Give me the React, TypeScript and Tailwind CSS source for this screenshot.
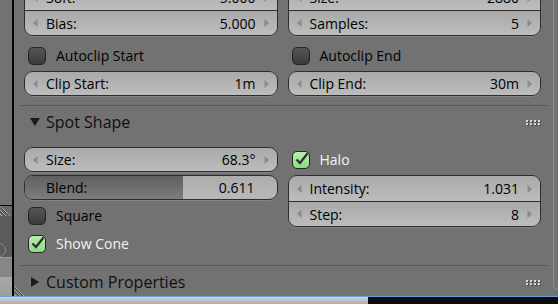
import React from 'react';

const font = { fontFamily: '"Open Sans", "Noto Sans", sans-serif' };

// Small left / right arrows drawn inside number fields
const ArrowL = () => (
  <svg width="5" height="8" viewBox="0 0 5 8" className="shrink-0">
    <path d="M4.5 0 L0 4 L4.5 8 Z" fill="#8a8a8a" />
  </svg>
);
const ArrowR = () => (
  <svg width="5" height="8" viewBox="0 0 5 8" className="shrink-0">
    <path d="M0.5 0 L5 4 L0.5 8 Z" fill="#8a8a8a" />
  </svg>
);

const FieldBody = ({ label, value }: { label: string; value: string }) => (
  <div className="flex h-full items-center bg-linear-to-b from-[#a9a9a9] to-[#bdbdbd] pl-[8px] pr-[8px] text-[14px] text-black">
    <ArrowL />
    <span className="ml-[8px]">{label}</span>
    <span className="ml-auto mr-[8px]">{value}</span>
    <ArrowR />
  </div>
);

const NumField = ({ label, value }: { label: string; value: string }) => (
  <div className="h-[25px] overflow-hidden rounded-[9px] border border-[#2d2d2d] shadow-[0_1px_0_#858585]">
    <FieldBody label={label} value={value} />
  </div>
);

// Fields stacked with align, sharing one outline
const FieldGroup = ({ items, className = '' }: { items: { label: string; value: string }[]; className?: string }) => (
  <div className={`flex flex-col overflow-hidden rounded-[9px] border border-[#2d2d2d] shadow-[0_1px_0_#858585] ${className}`}>
    {items.map((it, i) => (
      <div key={it.label} className={`h-[25px] ${i > 0 ? 'border-t border-[#2d2d2d]' : ''}`}>
        <FieldBody label={it.label} value={it.value} />
      </div>
    ))}
  </div>
);

const Slider = ({ label, value }: { label: string; value: number }) => (
  <div className="relative h-[25px] overflow-hidden rounded-[9px] border border-[#2d2d2d] bg-linear-to-b from-[#acacac] to-[#b9b9b9] shadow-[0_1px_0_#858585]">
    <div
      className="absolute inset-y-0 left-0 bg-linear-to-b from-[#606060] to-[#7d7d7d]"
      style={{ width: `${value * 102.5}%` }}
    />
    <div className="relative flex h-full items-center pl-[21px] pr-[22px] text-[14px] text-black">
      <span>{label}</span>
      <span className="ml-auto">{value.toFixed(3)}</span>
    </div>
  </div>
);

const Check = ({ label, on = false }: { label: string; on?: boolean }) => (
  <div className="flex h-[25px] items-center pl-[4px] text-[14px]">
    <div
      className={`relative h-[18px] w-[18px] rounded-[5px] border border-[#262626] ${
        on ? 'bg-linear-to-b from-[#b4f0aa] to-[#8fd985]' : 'bg-linear-to-b from-[#565656] to-[#3a3a3a]'
      }`}
    >
      {on && (
        <svg width="18" height="18" viewBox="0 0 18 18" className="absolute -left-px -top-px overflow-visible">
          <path d="M4.5 8.5 L8 12 L15.5 2.5" fill="none" stroke="#2e2e2e" strokeWidth="2.2" />
        </svg>
      )}
    </div>
    <span className={`ml-[10px] ${on ? 'text-[#f4f4f4]' : 'text-black'}`}>{label}</span>
  </div>
);

const Grip = () => (
  <div className="grid grid-cols-4 gap-x-[2px] gap-y-[1px]">
    {Array.from({ length: 8 }).map((_, i) => (
      <div key={i} className="h-[2px] w-[2px] bg-[#dadada] shadow-[1px_1px_0_#4a4a4a]" />
    ))}
  </div>
);

const Header = ({ title, open }: { title: string; open: boolean }) => (
  <div className="flex h-[33px] shrink-0 items-center border-t border-[#565656] pl-[10px] pr-[7px]">
    <svg width="10" height="10" viewBox="0 0 10 10">
      {open ? <path d="M0 1 L10 1 L5 9 Z" fill="#1c1c1c" /> : <path d="M1 0 L9 5 L1 10 Z" fill="#1c1c1c" />}
    </svg>
    <span className="ml-[6px] text-[16px] text-[#101010]">{title}</span>
    <div className="ml-auto">
      <Grip />
    </div>
  </div>
);

const Hatch = () => (
  <svg width="13" height="13" viewBox="0 0 13 13">
    <path d="M0 3 L10 13 M0 7 L6 13 M0 11 L2 13" stroke="#b0b0b0" strokeWidth="1" />
    <path d="M0 4 L9 13 M0 8 L5 13" stroke="#3c3c3c" strokeWidth="1" />
  </svg>
);

export default function App() {
  return (
    <div className="flex h-[304px] w-[558px] flex-col overflow-hidden bg-[#727272]" style={font}>
      <div className="flex h-[296px]">
        {/* neighbouring editor edge */}
        <div className="flex w-[12px] flex-col">
          <div className="h-[205px] bg-[#737373]" />
          <div className="h-px bg-black" />
          <div className="relative h-[10px] overflow-hidden bg-[#686868]">
            <div className="absolute -right-px top-[-3px]"><Hatch /></div>
          </div>
          <div className="relative h-[41px] overflow-hidden bg-[#5b5b5b]">
            <div className="absolute left-[-8px] top-[27px] h-[14px] w-[14px] rounded-full border border-[#8c8c8c]" />
          </div>
          <div className="h-px bg-[#9a9a9a]" />
          <div className="h-[19px] bg-[#878787]" />
          <div className="flex-1 bg-linear-to-b from-[#a7a7a7] to-[#9d9d9d]" />
        </div>
        <div className="w-[2px] bg-black" />

        {/* properties region */}
        <div className="relative flex flex-1 flex-col">
          {/* shadow panel (scrolled) */}
          <div className="grid grid-cols-2 gap-x-[10px] pb-[9px] pl-[10px] pr-[12px]">
            <div className="flex flex-col">
              <FieldGroup className="-mt-[16px]" items={[{ label: 'Soft:', value: '5.000' }, { label: 'Bias:', value: '5.000' }]} />
              <div className="mt-[7px]"><Check label="Autoclip Start" /></div>
              <div className="mt-[3px]"><NumField label="Clip Start:" value="1m" /></div>
            </div>
            <div className="flex flex-col">
              <FieldGroup className="-mt-[16px]" items={[{ label: 'Size:', value: '2880' }, { label: 'Samples:', value: '5' }]} />
              <div className="mt-[7px]"><Check label="Autoclip End" /></div>
              <div className="mt-[3px]"><NumField label="Clip End:" value="30m" /></div>
            </div>
          </div>

          <div className="mx-[6px]"><Header title="Spot Shape" open /></div>
          <div className="grid grid-cols-2 gap-x-[10px] pb-[9px] pl-[10px] pr-[12px] pt-[9px]">
            <div className="flex flex-col gap-[3px]">
              <NumField label="Size:" value="68.3°" />
              <Slider label="Blend:" value={0.611} />
              <Check label="Square" />
              <Check label="Show Cone" on />
            </div>
            <div className="flex flex-col gap-[3px]">
              <Check label="Halo" on />
              <FieldGroup items={[{ label: 'Intensity:', value: '1.031' }, { label: 'Step:', value: '8' }]} />
            </div>
          </div>

          <div className="mx-[6px]"><Header title="Custom Properties" open={false} /></div>

          <div className="absolute bottom-0 left-0">
            <Hatch />
          </div>
        </div>

        {/* scrollbar track */}
        <div className="w-[5px] pb-[6px]">
          <div className="h-full rounded-bl-[6px] border-b border-l border-[#8e8e8e]" />
        </div>
      </div>
      <div className="h-px bg-[#66a2dd]" />
      <div className="flex flex-1">
        <div className="w-[368px] bg-linear-to-b from-[#d2d2d2] to-[#ababab]" />
        <div className="flex-1 bg-[#0c0c0c]" />
      </div>
    </div>
  );
}
